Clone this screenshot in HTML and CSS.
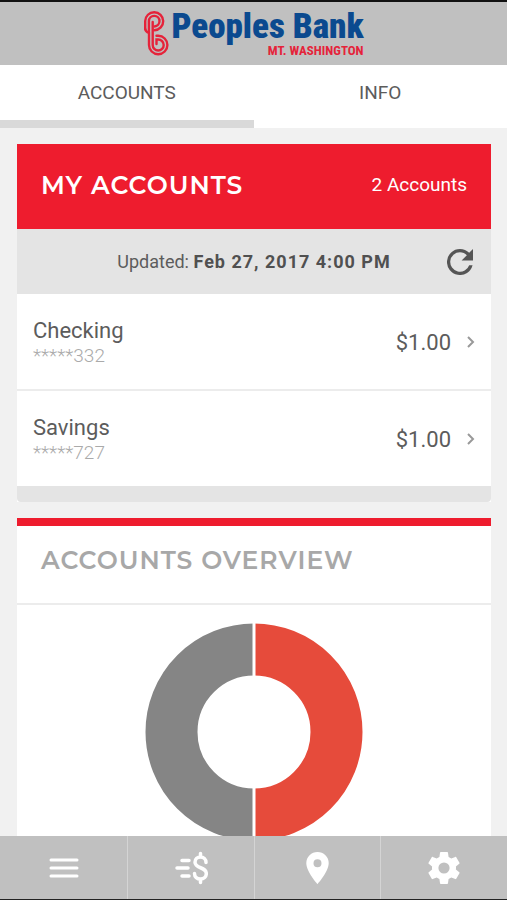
FILE: index.html
```
<!DOCTYPE html>
<html lang="en">
<head>
  <meta charset="UTF-8">
  <meta name="viewport" content="width=device-width, initial-scale=1.0">
  <title>Peoples Bank Mt. Washington</title>
  <link rel="stylesheet" href="styles.css">
</head>
<body>
  <header class="top-bar">
    <div class="logo">
      <svg class="logo-mark" viewBox="0 0 26 46" width="26" height="46">
        <g fill="none" stroke="#e5233a" stroke-width="2.400" stroke-linecap="round">
          <path d="M2.200 19V11A9 9 0 1 1 11.500 20.200"/>
          <path d="M5.900 22V11A5.300 5.300 0 1 1 11.500 16.500"/>
          <path d="M2.200 19Q2.500 21.500 6 23V35A9.200 9.200 0 1 0 15.200 25.800H13.500"/>
          <path d="M9.700 12V35A5.500 5.500 0 1 0 15.200 29.500H13.500V34"/>
        </g>
      </svg>
      <div class="logo-text">
        <span class="logo-name">Peoples Bank</span>
        <span class="logo-place">MT. WASHINGTON</span>
      </div>
    </div>
  </header>

  <nav class="tabs">
    <a class="tab active" href="#accounts">ACCOUNTS</a>
    <a class="tab" href="#info">INFO</a>
  </nav>

  <main class="content" id="accounts">
    <section class="card">
      <div class="card-header">
        <h1>MY ACCOUNTS</h1>
        <span class="count">2 Accounts</span>
      </div>
      <div class="updated">
        <p>Updated: <strong>Feb 27, 2017 4:00 PM</strong></p>
        <button class="refresh" type="button" aria-label="Refresh">
          <svg viewBox="4 4 16 16" width="26" height="26"><path fill="#555" d="M17.65 6.35A7.96 7.96 0 0 0 12 4a8 8 0 1 0 7.73 10h-2.08A6 6 0 1 1 12 6c1.66 0 3.14.69 4.22 1.78L13 11h7V4z"/></svg>
        </button>
      </div>
      <a class="account" href="#checking">
        <span class="account-info">
          <span class="account-name">Checking</span>
          <span class="account-number">*****332</span>
        </span>
        <span class="amount">$1.00</span>
        <svg class="chevron" viewBox="0 0 8 12" width="8" height="12"><path d="M1 1l5 5-5 5"/></svg>
      </a>
      <a class="account" href="#savings">
        <span class="account-info">
          <span class="account-name">Savings</span>
          <span class="account-number">*****727</span>
        </span>
        <span class="amount">$1.00</span>
        <svg class="chevron" viewBox="0 0 8 12" width="8" height="12"><path d="M1 1l5 5-5 5"/></svg>
      </a>
      <div class="card-footer"></div>
    </section>

    <section class="card overview">
      <h2>ACCOUNTS OVERVIEW</h2>
      <div class="chart">
        <svg viewBox="0 0 218 218" width="218" height="218">
          <path d="M109 26.500a82.500 82.500 0 0 1 0 165" fill="none" stroke="#e64b3b" stroke-width="52"/>
          <path d="M109 26.500a82.500 82.500 0 0 0 0 165" fill="none" stroke="#858585" stroke-width="52"/>
          <path d="M109 0v218" stroke="#fff" stroke-width="3"/>
        </svg>
      </div>
    </section>
  </main>

  <nav class="bottom-nav">
    <button type="button" aria-label="Menu">
      <svg viewBox="0 0 30 20" width="30" height="20"><path d="M2 2h26M2 10h26M2 18h26" stroke="#fff" stroke-width="3" stroke-linecap="round"/></svg>
    </button>
    <button type="button" aria-label="Transfer">
      <svg viewBox="0 0 34 34" width="34" height="34" fill="none" stroke="#fff" stroke-width="3.500" stroke-linecap="round">
        <path d="M8 9.500h7M3 17h11M8 25h7"/>
        <path d="M32 11.500C32 8 29.500 6 26.500 6S21 8 21 11.200C21 18 32.300 15.500 32.300 22.500C32.300 26 29.800 28 26.500 28S20.500 26 20.500 22.500M26.500 2.500V6M26.500 28V31.500"/>
      </svg>
    </button>
    <button type="button" aria-label="Locations">
      <svg viewBox="5 2 14 20" width="23" height="32"><path fill="#fff" d="M12 2a7 7 0 0 0-7 7c0 5.250 7 13 7 13s7-7.750 7-13a7 7 0 0 0-7-7zm0 9.500a2.500 2.500 0 1 1 0-5 2.500 2.500 0 0 1 0 5z"/></svg>
    </button>
    <button type="button" aria-label="Settings">
      <svg viewBox="2 2 20 20" width="32" height="32"><path fill="#fff" d="M19.430 12.980c.04-.32.07-.64.07-.98s-.03-.66-.07-.98l2.110-1.650c.19-.15.24-.42.12-.64l-2-3.460c-.12-.22-.39-.3-.61-.22l-2.490 1c-.52-.4-1.080-.73-1.690-.98l-.38-2.650A.49.490 0 0 0 14 2h-4c-.25 0-.46.180-.49.420l-.38 2.650c-.61.250-1.170.590-1.690.98l-2.490-1c-.23-.09-.49 0-.61.220l-2 3.460c-.13.220-.07.490.12.640l2.110 1.650c-.04.320-.07.650-.07.980s.03.660.07.980l-2.110 1.650c-.19.150-.24.420-.12.640l2 3.460c.12.220.39.300.61.220l2.490-1c.52.400 1.080.730 1.690.980l.38 2.650c.03.240.24.420.49.420h4c.25 0 .46-.18.490-.42l.38-2.650c.61-.25 1.170-.59 1.690-.98l2.490 1c.23.090.49 0 .61-.22l2-3.460c.12-.22.07-.49-.12-.64l-2.110-1.650zM12 15.500a3.500 3.500 0 1 1 0-7 3.500 3.500 0 0 1 0 7z"/></svg>
    </button>
  </nav>
</body>
</html>
```
FILE: styles.css
```
* {
  box-sizing: border-box;
}
body {
  display: flex;
  flex-direction: column;
  height: 100vh;
  margin: 0;
  font-family: Roboto, "Liberation Sans", sans-serif;
  background: #f1f1f1;
  color: #5c5c5c;
}
a {
  color: inherit;
  text-decoration: none;
}
button {
  padding: 0;
  border: none;
  background: none;
  cursor: pointer;
}
svg {
  display: block;
}
.top-bar {
  display: flex;
  justify-content: center;
  height: 65px;
  flex: none;
  padding-top: 8px;
  border-top: 2px solid #111;
  background: #c0c0c0;
}
.logo {
  display: flex;
  gap: 2px;
}
.logo-text {
  display: flex;
  flex-direction: column;
  align-items: flex-end;
  font-family: "Roboto Condensed", "Liberation Sans Narrow", "DejaVu Sans Condensed", sans-serif;
  font-weight: bold;
}
.logo-name {
  font-size: 35px;
  line-height: 34px;
  font-weight: 900;
  color: #0b4a8f;
}
.logo-place {
  font-size: 13px;
  line-height: 14px;
  color: #e5233a;
}
.tabs {
  display: flex;
  flex: none;
  background: #fff;
}
.tab {
  flex: 1;
  padding-bottom: 8px;
  font-size: 19px;
  line-height: 55px;
  text-align: center;
}
.tab.active {
  padding-bottom: 0;
  border-bottom: 8px solid #d9d9d9;
}
.content {
  flex: 1;
  min-height: 0;
  padding: 16px 16px 16px 17px;
  overflow-y: auto;
  scrollbar-width: none;
}
.card {
  margin-bottom: 16px;
  background: #fff;
}
.card-header {
  display: flex;
  justify-content: space-between;
  align-items: center;
  height: 85px;
  padding: 0 24px 4px;
  background: #ee1c2e;
  color: #fff;
}
h1,
h2 {
  margin: 0;
  font-family: Montserrat, Lato, sans-serif;
  font-size: 25px;
  font-weight: 600;
  letter-spacing: 1px;
}
.count {
  font-size: 19px;
}
.updated {
  display: flex;
  align-items: center;
  height: 65px;
  padding: 0 18px;
  background: #e4e4e4;
}
.updated p {
  flex: 1;
  margin: 0;
  padding-left: 26px;
  font-size: 18px;
  text-align: center;
}
.updated strong {
  letter-spacing: 1px;
  color: #505050;
}
.account {
  display: flex;
  align-items: center;
  padding: 24px 16px 21px;
}
.account + .account {
  border-top: 2px solid #ececec;
}
.account-info {
  display: flex;
  flex-direction: column;
  flex: 1;
}
.account-name {
  font-size: 22px;
  line-height: 26px;
}
.account-number {
  font-size: 19px;
  line-height: 24px;
  font-weight: 300;
  color: #aaa;
}
.amount {
  padding-bottom: 2px;
  font-size: 22px;
}
.chevron {
  margin: 0 0 2px 16px;
  fill: none;
  stroke: #999;
  stroke-width: 2;
}
.card-footer {
  height: 16px;
  border-radius: 0 0 4px 4px;
  background: #e4e4e4;
}
.overview {
  border-top: 8px solid #ee1c2e;
}
.overview h2 {
  height: 79px;
  padding: 0 24px;
  border-bottom: 2px solid #ececec;
  line-height: 68px;
  color: #a8a8a8;
}
.chart {
  display: flex;
  justify-content: center;
  padding: 18px 0;
}
.bottom-nav {
  display: flex;
  flex: none;
  height: 64px;
  padding-left: 1px;
  border-bottom: 1px solid #222;
  background: #c0c0c0;
}
.bottom-nav button {
  display: flex;
  flex: 1;
  align-items: center;
  justify-content: center;
}
.bottom-nav button + button {
  border-left: 1px solid #d4d4d4;
}
```
